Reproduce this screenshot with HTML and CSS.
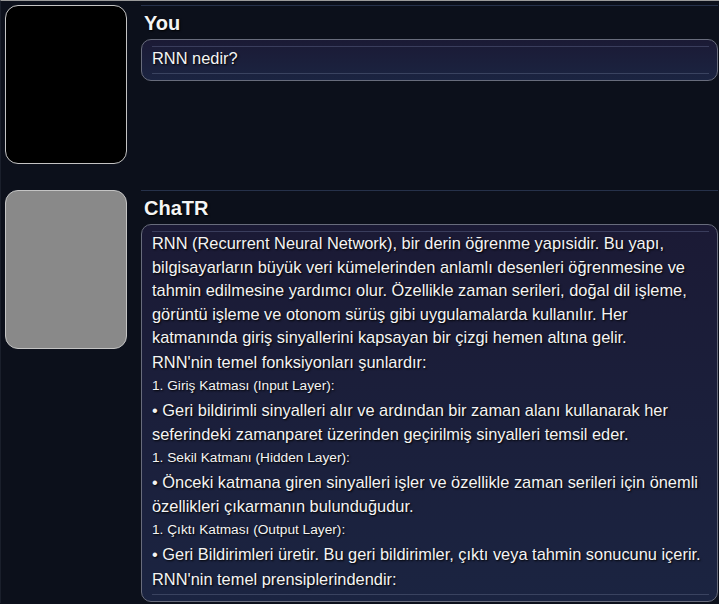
FILE: index.html
```html
<!DOCTYPE html>
<html lang="tr">
<head>
<meta charset="utf-8">
<title>ChaTR</title>
<link rel="stylesheet" href="styles.css">
</head>
<body>
<div class="chat">
  <div class="row">
    <div class="avatar avatar-user"></div>
    <div class="content">
      <div class="name">You</div>
      <div class="bubble">
        <div class="inner">
          <p class="para">RNN nedir?</p>
        </div>
      </div>
    </div>
  </div>
  <div class="row">
    <div class="avatar avatar-bot"></div>
    <div class="content">
      <div class="name">ChaTR</div>
      <div class="bubble">
        <div class="inner">
          <p class="para">RNN (Recurrent Neural Network), bir derin öğrenme yapısidir. Bu yapı, bilgisayarların büyük veri kümelerinden anlamlı desenleri öğrenmesine ve tahmin edilmesine yardımcı olur. Özellikle zaman serileri, doğal dil işleme, görüntü işleme ve otonom sürüş gibi uygulamalarda kullanılır. Her katmanında giriş sinyallerini kapsayan bir çizgi hemen altına gelir.</p>
          <p class="para">RNN'nin temel fonksiyonları şunlardır:</p>
          <p class="small">1. Giriş Katması (Input Layer):</p>
          <p class="para">• Geri bildirimli sinyalleri alır ve ardından bir zaman alanı kullanarak her seferindeki zamanparet üzerinden geçirilmiş sinyalleri temsil eder.</p>
          <p class="small">1. Sekil Katmanı (Hidden Layer):</p>
          <p class="para">• Önceki katmana giren sinyalleri işler ve özellikle zaman serileri için önemli özellikleri çıkarmanın bulunduğudur.</p>
          <p class="small">1. Çıktı Katması (Output Layer):</p>
          <p class="para">• Geri Bildirimleri üretir. Bu geri bildirimler, çıktı veya tahmin sonucunu içerir.</p>
          <p class="para">RNN'nin temel prensiplerindendir:</p>
        </div>
      </div>
    </div>
  </div>
</div>
</body>
</html>
```
FILE: styles.css
```css
html, body {
  margin: 0;
  padding: 0;
  background: #0c101b;
}
body {
  border-top: 1px solid #9a9a9a;
  border-left: 1px solid #1a1f2b;
  font-family: "Liberation Sans", Arial, sans-serif;
  color: #f4f4f4;
  min-height: 603px;
  box-sizing: border-box;
}
.chat {
  display: flex;
  flex-direction: column;
  gap: 26px;
  padding: 4px 1px 0 4px;
}
.row {
  display: flex;
  gap: 14px;
  align-items: flex-start;
}
.avatar {
  flex: 0 0 auto;
  width: 122px;
  height: 159px;
  box-sizing: border-box;
  border: 1.5px solid #c4c4c4;
  border-radius: 13px;
}
.avatar-user { background: #000; }
.avatar-bot { background: #898989; }
.content {
  flex: 1;
  min-width: 0;
  border-top: 1px solid #26314a;
  padding-top: 5px;
}
.name {
  font-weight: bold;
  font-size: 20px;
  line-height: 24px;
  margin: 0 0 4px 3px;
  text-shadow: 1px 1px 2px #000;
}
.bubble {
  border: 1px solid #686c7c;
  border-radius: 10px;
  background: linear-gradient(180deg, #1b1a35 0%, #1b2441 100%);
  padding: 6px 8px 6px 10px;
}
.inner {
  border-top: 1px solid #3a3d5c;
  border-bottom: 1px solid #3a4360;
}
.para, .small {
  margin: 0;
  text-shadow: 1px 1px 2px #000;
}
.para {
  font-size: 16.4px;
  line-height: 23.5px;
  margin-bottom: 1.5px;
}
.small {
  font-size: 13.7px;
  line-height: 20px;
  margin-bottom: 3.4px;
}
.inner .para:last-child {
  margin-bottom: 2.5px;
}
```
